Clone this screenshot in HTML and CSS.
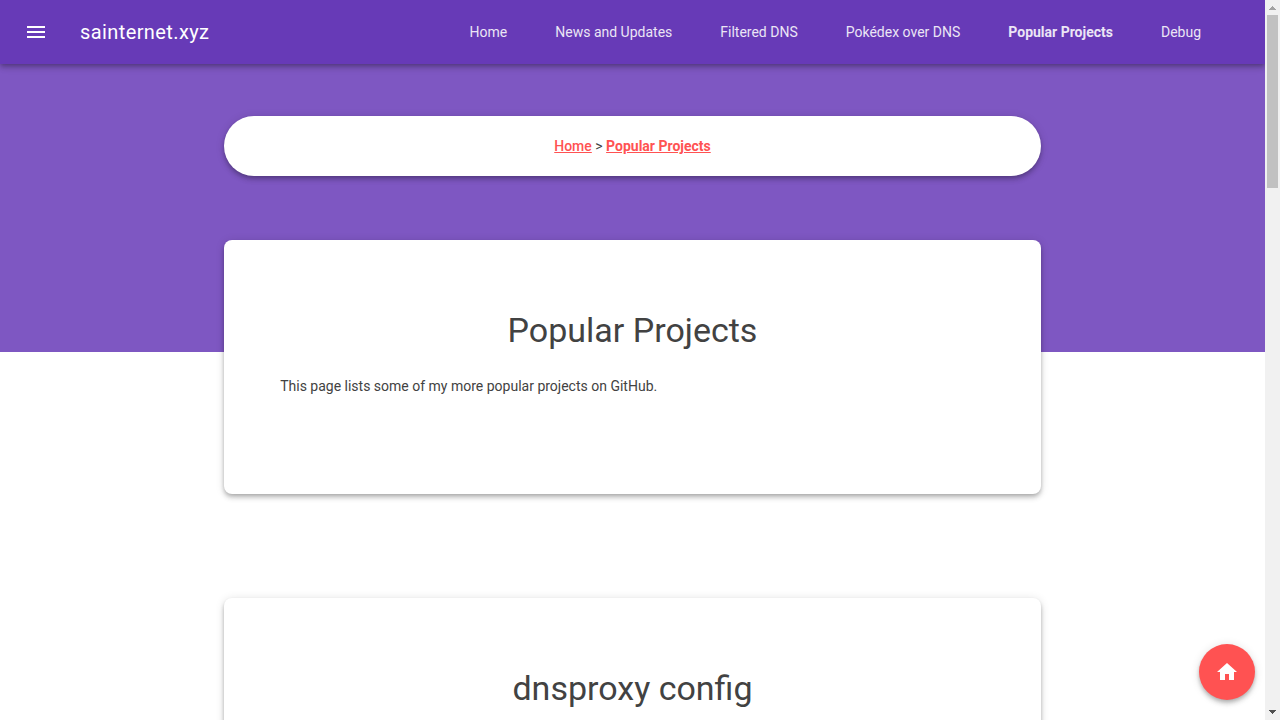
FILE: index.html
```html
<!DOCTYPE html>
<html lang="en">
<head>
  <meta charset="utf-8">
  <meta name="viewport" content="width=device-width, initial-scale=1">
  <title>Popular Projects - sainternet.xyz</title>
  <link rel="stylesheet" href="styles.css">
</head>
<body class="window">
  <div class="page">
    <header class="header">
      <button class="menu-button" type="button" aria-label="Open menu">
        <svg viewBox="0 0 24 24" width="24" height="24" fill="currentColor" aria-hidden="true"><path d="M3 18h18v-2H3v2zm0-5h18v-2H3v2zm0-7v2h18V6H3z"/></svg>
      </button>
      <span class="site-title">sainternet.xyz</span>
      <nav class="nav" aria-label="Main">
        <a class="nav-link" href="#">Home</a>
        <a class="nav-link" href="#">News and Updates</a>
        <a class="nav-link" href="#">Filtered DNS</a>
        <a class="nav-link" href="#">Pokédex over DNS</a>
        <a class="nav-link nav-link-current" href="#" aria-current="page">Popular Projects</a>
        <a class="nav-link" href="#">Debug</a>
      </nav>
    </header>
    <main class="main">
      <nav class="breadcrumbs" aria-label="Breadcrumbs">
        <p class="crumbs"><a class="crumb" href="#">Home</a> &gt; <a class="crumb crumb-current" href="#">Popular Projects</a></p>
      </nav>
      <section class="card">
        <h1 class="card-title">Popular Projects</h1>
        <p class="card-text">This page lists some of my more popular projects on GitHub.</p>
      </section>
      <section class="card">
        <h1 class="card-title">dnsproxy config</h1>
      </section>
    </main>
  </div>
  <div class="scrollbar" aria-hidden="true">
    <svg class="scroll-arrow" viewBox="0 0 15 15" width="15" height="15" shape-rendering="crispEdges"><path fill="#a3a3a3" d="M7 6h1v1h1v1h1v1h1v1H4V9h1V8h1V7h1z"/></svg>
    <div class="scroll-track"><div class="scroll-thumb"></div></div>
    <svg class="scroll-arrow" viewBox="0 0 15 15" width="15" height="15" shape-rendering="crispEdges"><path fill="#505050" d="M4 5h7v1h-1v1H9v1H8v1H7V8H6V7H5V6H4z"/></svg>
  </div>
  <a class="home-fab" href="#" aria-label="Home">
    <svg viewBox="0 0 24 24" width="24" height="24" fill="currentColor" aria-hidden="true"><path d="M10 20v-6h4v6h5v-8h3L12 3 2 12h3v8z"/></svg>
  </a>
</body>
</html>
```

FILE: styles.css
```css
* {
  box-sizing: border-box;
}

.window {
  display: flex;
  height: 100vh;
  margin: 0;
  overflow: hidden;
  background: #fff;
  color: #424242;
  font: 400 14px/24px Roboto, "Liberation Sans", sans-serif;
}

.page {
  flex: 1;
  min-width: 0;
  overflow: hidden;
  background: linear-gradient(#7e57c2, #7e57c2) 0 0 / 100% 352px no-repeat;
}

.header,
.breadcrumbs,
.card,
.home-fab {
  box-shadow: 0 4px 5px 0 rgba(0, 0, 0, 0.14), 0 1px 10px 0 rgba(0, 0, 0, 0.12), 0 2px 4px -1px rgba(0, 0, 0, 0.2);
}

.header {
  display: flex;
  align-items: center;
  height: 64px;
  padding: 0 40px 0 12px;
  background: #673ab7;
  color: #fff;
}

.menu-button {
  display: grid;
  place-items: center;
  width: 48px;
  height: 48px;
  margin-right: 20px;
  padding: 0;
  border: 0;
  background: none;
  color: inherit;
}

.site-title {
  font-size: 20px;
  letter-spacing: 0.02em;
}

.nav {
  display: flex;
  margin-left: auto;
}

.nav-link {
  padding: 0 24px;
  color: #fff;
  line-height: 64px;
  text-decoration: none;
  white-space: nowrap;
  opacity: 0.87;
}

.nav-link-current {
  font-weight: 700;
}

.main {
  display: grid;
  grid-template-columns: repeat(12, 1fr);
  column-gap: 16px;
  padding: 52px 16px;
}

.breadcrumbs,
.card {
  grid-column: 3 / span 8;
  background: #fff;
}

.breadcrumbs {
  margin-bottom: 64px;
  padding: 18px;
  border-radius: 30px;
  text-align: center;
}

.crumbs {
  margin: 0;
}

.crumb {
  color: #ff5252;
  font-weight: 500;
}

.crumb-current {
  font-weight: 700;
}

.card {
  min-height: 254px;
  margin-bottom: 104px;
  padding: 66px 56px 80px;
  border-radius: 8px;
}

.card-title {
  margin: 0 0 20px;
  font-size: 34px;
  font-weight: 400;
  line-height: 48px;
  text-align: center;
}

.card-text {
  margin: 0 0 16px;
}

.scrollbar {
  display: flex;
  flex: none;
  flex-direction: column;
  width: 15px;
  background: #f1f1f1;
}

.scroll-arrow {
  display: block;
}

.scroll-track {
  flex: 1;
  padding: 0 2px;
}

.scroll-thumb {
  height: 25%;
  background: #c1c1c1;
}

.home-fab {
  position: fixed;
  right: 25px;
  bottom: 20px;
  display: grid;
  place-items: center;
  width: 56px;
  height: 56px;
  border-radius: 50%;
  background: #ff5252;
  color: #fff;
}
```
